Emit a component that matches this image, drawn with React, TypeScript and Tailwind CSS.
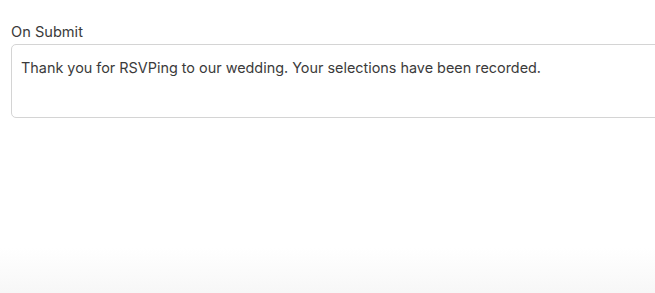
export default function App() {
  return (
    <div className="relative h-[293px] w-[655px] overflow-hidden bg-white" style={{ fontFamily: 'Inter, "Noto Sans", sans-serif' }}>
      <div className="pl-[11px] pt-[22px]">
        <label className="block text-[14.6px] leading-[20px] text-[#3a3a3a]">On Submit</label>
        <div className="mt-[2px] h-[74px] w-[700px] rounded-[5px] border border-[#d4d4d4] bg-white px-[9px] py-[13px] text-[14.4px] leading-[20px] text-[#3b3b3b]">
          Thank you for RSVPing to our wedding. Your selections have been recorded.
        </div>
      </div>
      <div className="absolute inset-x-0 bottom-0 h-[45px] bg-gradient-to-b from-white to-[#f7f7f7]" />
    </div>
  );
}
